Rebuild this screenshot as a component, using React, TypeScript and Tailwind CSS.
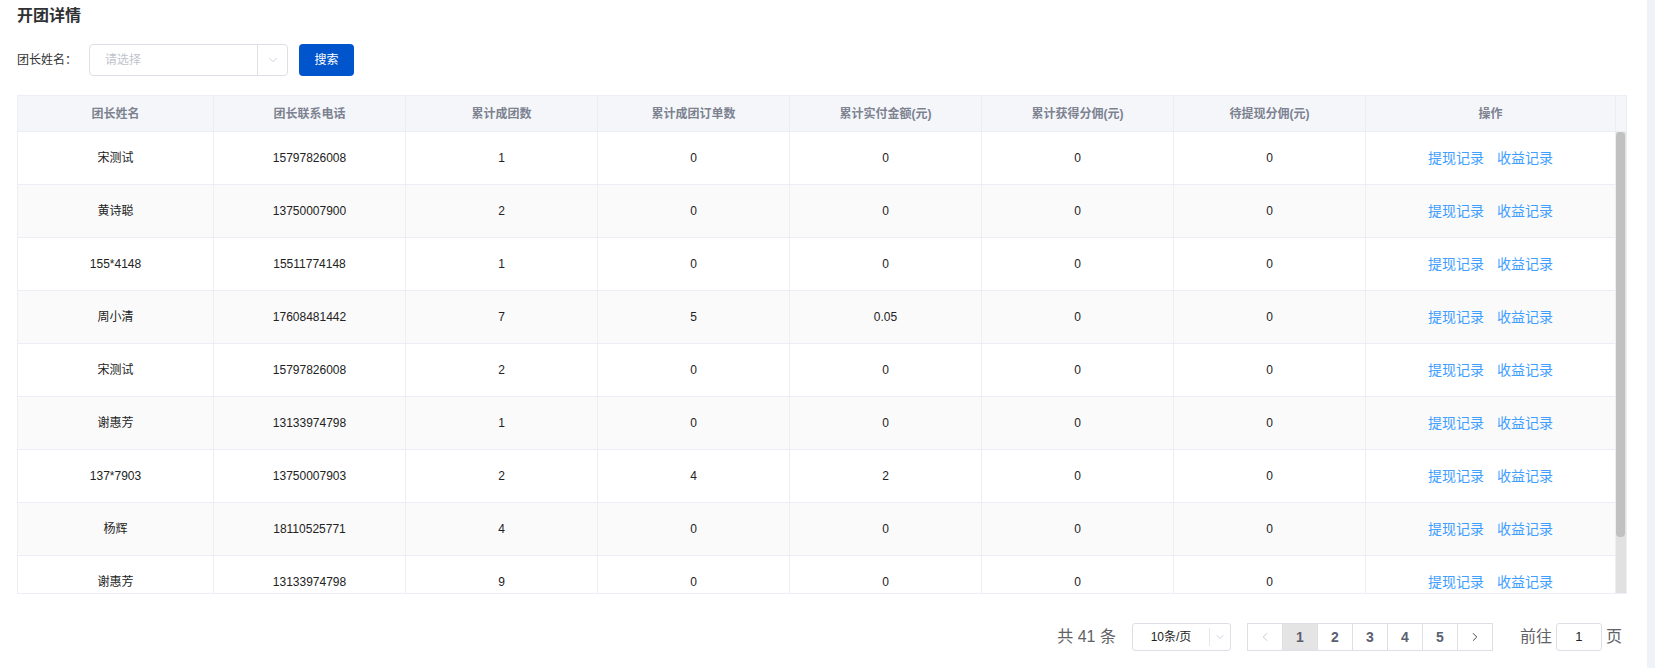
import { ChevronDown, ChevronLeft, ChevronRight } from "lucide-react";

type Row = {
  name: string;
  phone: string;
  groups: string;
  orders: string;
  paid: string;
  earned: string;
  pending: string;
};

const ROWS: Row[] = [
  { name: "宋测试", phone: "15797826008", groups: "1", orders: "0", paid: "0", earned: "0", pending: "0" },
  { name: "黄诗聪", phone: "13750007900", groups: "2", orders: "0", paid: "0", earned: "0", pending: "0" },
  { name: "155*4148", phone: "15511774148", groups: "1", orders: "0", paid: "0", earned: "0", pending: "0" },
  { name: "周小清", phone: "17608481442", groups: "7", orders: "5", paid: "0.05", earned: "0", pending: "0" },
  { name: "宋测试", phone: "15797826008", groups: "2", orders: "0", paid: "0", earned: "0", pending: "0" },
  { name: "谢惠芳", phone: "13133974798", groups: "1", orders: "0", paid: "0", earned: "0", pending: "0" },
  { name: "137*7903", phone: "13750007903", groups: "2", orders: "4", paid: "2", earned: "0", pending: "0" },
  { name: "杨辉", phone: "18110525771", groups: "4", orders: "0", paid: "0", earned: "0", pending: "0" },
  { name: "谢惠芳", phone: "13133974798", groups: "9", orders: "0", paid: "0", earned: "0", pending: "0" },
];

const HEADERS = [
  "团长姓名",
  "团长联系电话",
  "累计成团数",
  "累计成团订单数",
  "累计实付金额(元)",
  "累计获得分佣(元)",
  "待提现分佣(元)",
  "操作",
];

const COLS = "grid grid-cols-[196px_192px_192px_192px_192px_192px_192px_250px]";

function Pager() {
  return (
    <div className="mt-[29px] flex h-[28px] items-center justify-end pr-[5px] text-[#606266]">
      <span className="text-[16px]">共 41 条</span>
      <div className="ml-[16px] flex h-[28px] w-[99px] items-center rounded-[3px] border border-[#dcdfe6]">
        <span className="flex-1 text-center text-[12px] text-[#222]">10条/页</span>
        <span className="flex h-[18px] w-[21px] items-center justify-center border-l border-[#e4e7ed]">
          <ChevronDown size={12} strokeWidth={1.5} className="text-[#c0c4cc]" />
        </span>
      </div>
      <div className="ml-[16px] flex h-[28px] border-r border-[#dcdfe6]">
        <button className="flex w-[35px] items-center justify-center border-y border-l border-[#dcdfe6] text-[#c0c4cc]">
          <ChevronLeft size={14} strokeWidth={1.5} />
        </button>
        {["1", "2", "3", "4", "5"].map((n) => (
          <button
            key={n}
            className={`flex w-[35px] items-center justify-center border-y border-l border-[#dcdfe6] text-[14px] font-bold ${
              n === "1" ? "bg-[#e4e4e4] text-[#5b6070]" : "bg-white text-[#5b6070]"
            }`}
          >
            {n}
          </button>
        ))}
        <button className="flex w-[35px] items-center justify-center border-y border-l border-[#dcdfe6] text-[#303133]">
          <ChevronRight size={14} strokeWidth={1.5} />
        </button>
      </div>
      <span className="ml-[27px] text-[16px]">前往</span>
      <div className="ml-[4px] flex h-[28px] w-[46px] items-center justify-center rounded-[3px] border border-[#dcdfe6] text-[13px] text-[#222]">
        1
      </div>
      <span className="ml-[4px] text-[16px]">页</span>
    </div>
  );
}

export default function App() {
  return (
    <div className="flex h-[668px] w-[1655px] bg-white font-['Liberation_Sans','Noto_Sans_CJK_SC',sans-serif]">
      <div className="w-[1647px] pl-[17px] pr-[20px]">
        <h2 className="mt-[4px] h-[24px] text-[16px] leading-[24px] font-bold text-[#303133]">开团详情</h2>

        <div className="mt-[16px] flex h-[32px] items-center">
          <label className="w-[72px] text-[12px] text-[#333]">团长姓名：</label>
          <div className="flex h-[32px] w-[199px] items-center rounded-[4px] border border-[#dcdfe6]">
            <span className="flex-1 pl-[15px] text-[12px] text-[#c0c4cc]">请选择</span>
            <span className="flex h-full w-[30px] items-center justify-center border-l border-[#dcdfe6]">
              <ChevronDown size={14} strokeWidth={1.25} className="text-[#c0c4cc]" />
            </span>
          </div>
          <button className="ml-[11px] h-[32px] w-[55px] rounded-[4px] bg-[#0055cc] text-[12px] text-white">
            搜索
          </button>
        </div>

        <div className="mt-[19px] w-[1610px] border border-[#ebeef5]">
          <div className="flex h-[36px] border-b border-[#ebeef5] bg-[#f5f6fa]">
            <div className={COLS}>
              {HEADERS.map((h) => (
                <div
                  key={h}
                  className="flex items-center justify-center border-r border-[#ebeef5] text-[12px] font-bold text-[#7c8290]"
                >
                  {h}
                </div>
              ))}
            </div>
            <div className="w-[10px]" />
          </div>

          <div className="flex h-[461px] overflow-hidden">
            <div className="w-[1598px]">
              {ROWS.map((r, i) => (
                <div
                  key={i}
                  className={`${COLS} h-[53px] shrink-0 border-b border-[#ebeef5] text-[12px] text-[#222] ${
                    i % 2 === 1 ? "bg-[#fafafa]" : "bg-white"
                  }`}
                >
                  {[r.name, r.phone, r.groups, r.orders, r.paid, r.earned, r.pending].map((v, j) => (
                    <div key={j} className="flex items-center justify-center border-r border-[#ebeef5]">
                      {v}
                    </div>
                  ))}
                  <div className="flex items-center justify-center gap-[13px] border-r border-[#ebeef5] text-[14px] text-[#409eff]">
                    <span>提现记录</span>
                    <span>收益记录</span>
                  </div>
                </div>
              ))}
            </div>
            <div className="w-[10px] bg-[#e1e1e1]">
              <div className="h-[405px] w-[9px] rounded-[4px] bg-[#c1c1c1]" />
            </div>
          </div>
        </div>

        <Pager />
      </div>
      <div className="flex-1 bg-[#eff2f6]" />
    </div>
  );
}
